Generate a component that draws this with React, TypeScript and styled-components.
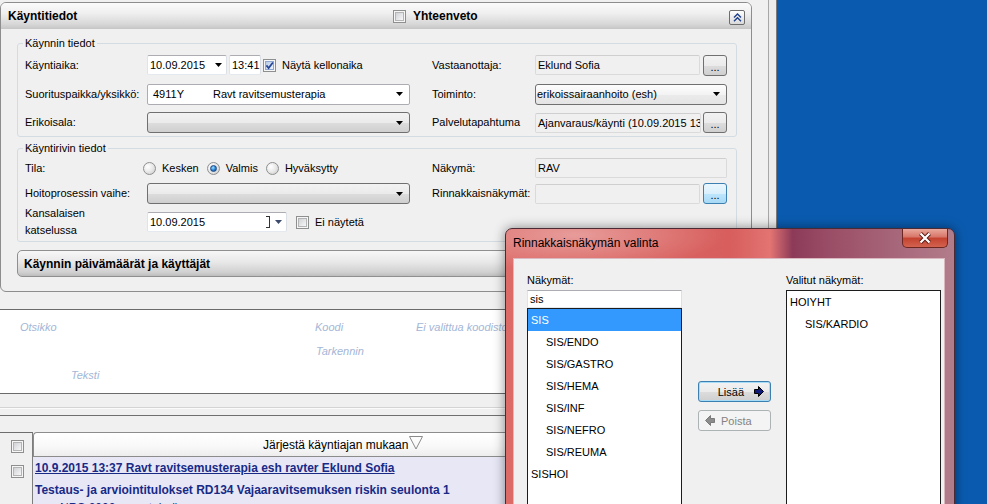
import React from 'react';
import styled, { createGlobalStyle } from 'styled-components';

const FONT = `"Liberation Sans", Arial, sans-serif`;

const GlobalStyle = createGlobalStyle`
  html, body {
    margin: 0;
    padding: 0;
    overflow: hidden;
    background: #f0f0f0;
  }
  body {
    font-family: ${FONT};
    font-size: 11px;
    color: #000;
  }
  * {
    box-sizing: border-box;
  }
`;

const Screen = styled.div`
  position: relative;
  display: flex;
  width: 987px;
  height: 504px;
  overflow: hidden;
`;

const AppArea = styled.div`
  display: flex;
  flex: none;
  width: 777px;
  background: #f0f0f0;
  border-right: 1px solid #7a7a7a;
`;

const MainCol = styled.div`
  display: flex;
  flex-direction: column;
  flex: none;
  width: 768px;
  overflow: hidden;
`;

const SideRail = styled.div`
  flex: 1;
  border-left: 1px solid #a7a7a7;
  background: #ececec;
`;

const Desktop = styled.div`
  flex: 1;
  background: #0a5bb0;
`;

/* ---------- main panel ---------- */

const Panel = styled.section`
  flex: none;
  width: 752px;
  margin-top: 2px;
  border: 1px solid #8d8d8d;
  border-radius: 6px;
  background: #f0f0f0;
  overflow: hidden;
`;

const PanelHeader = styled.header`
  display: grid;
  grid-template-columns: 385px 1fr auto;
  align-items: center;
  height: 26px;
  padding: 0 6px 0 7px;
  background: linear-gradient(#fbfbfb, #efefef 40%, #d8d8d8 80%, #c6c6c6);
`;

const PanelTitle = styled.span`
  font-size: 12px;
  font-weight: bold;
`;

const CollapseButton = styled.button`
  display: flex;
  align-items: center;
  justify-content: center;
  width: 16px;
  height: 15px;
  margin-top: 2px;
  padding: 0;
  border: 1px solid #6d6d6d;
  border-radius: 2px;
  background: linear-gradient(#ffffff, #ececec 50%, #d9d9d9);
`;

const PanelBody = styled.div`
  padding: 8px 14px 14px 16px;
`;

const GroupBox = styled.fieldset<{ $pad: string; $top?: number }>`
  margin: ${(p) => p.$top ?? 0}px 0 0;
  padding: ${(p) => p.$pad};
  min-inline-size: 0;
  border: 1px solid #d3dce3;
  border-radius: 3px;
`;

const GroupLegend = styled.legend`
  margin-left: -2px;
  padding: 0 2px;
  font-size: 11px;
  line-height: 13px;
`;

const FormGrid = styled.div<{ $rows: string; $gap: number }>`
  display: grid;
  grid-template-columns: 122px 263px 22px 103px 192px;
  grid-template-rows: ${(p) => p.$rows};
  row-gap: ${(p) => p.$gap}px;
  align-items: center;
`;

const FieldLabel = styled.span<{ $right?: boolean }>`
  grid-column: ${(p) => (p.$right ? 4 : 1)};
  white-space: nowrap;
  line-height: 17px;
`;

const FieldRow = styled.div<{ $gap: number }>`
  display: flex;
  align-items: center;
  gap: ${(p) => p.$gap}px;
  min-width: 0;
`;

const TextBox = styled.div<{ $readonly?: boolean; $w?: number }>`
  display: flex;
  align-items: center;
  flex: ${(p) => (p.$w ? 'none' : '1')};
  width: ${(p) => (p.$w ? `${p.$w}px` : 'auto')};
  min-width: 0;
  height: 20px;
  padding: 0 4px 0 2px;
  border: 1px solid;
  border-color: ${(p) =>
    p.$readonly ? '#cfcfcf #dadada #dadada #dadada' : '#abadb3 #dbdfe6 #e3e9ef #e2e3ea'};
  border-radius: 2px;
  background: ${(p) => (p.$readonly ? '#f0f0f0' : '#fff')};
  white-space: nowrap;
  overflow: hidden;
`;

const Combo = styled.div<{ $variant: 'white' | 'light' | 'grey' }>`
  display: flex;
  align-items: center;
  flex: 1;
  height: 21px;
  padding: 0 6px 0 ${(p) => (p.$variant === 'white' ? 5 : 1)}px;
  border: 1px solid ${(p) => (p.$variant === 'white' ? '#abadb3' : '#707070')};
  border-radius: ${(p) => (p.$variant === 'white' ? 2 : 3)}px;
  background: ${(p) =>
    p.$variant === 'white'
      ? '#fff'
      : p.$variant === 'light'
        ? 'linear-gradient(#fdfdfd, #f3f3f3 50%, #ebebeb 51%, #e4e4e4)'
        : 'linear-gradient(#f2f2f2, #ebebeb 50%, #dddddd 51%, #cfcfcf)'};
  white-space: nowrap;
`;

const ComboCode = styled.span`
  width: 60px;
  flex: none;
`;

const ArrowSvg = styled.svg`
  flex: none;
  margin-left: auto;
`;

const ComboArrow = ({ color = '#000' }: { color?: string }) => (
  <ArrowSvg width="7" height="4" viewBox="0 0 7 4">
    <polygon points="0,0 7,0 3.5,4" fill={color} />
  </ArrowSvg>
);

const Caret = styled.span`
  flex: none;
  width: 4px;
  height: 12px;
  margin-left: auto;
  margin-right: 5px;
  border: 1px solid #333;
  border-left: none;
`;

const CaretArrow = styled.svg`
  flex: none;
`;

const DotsButton = styled.button<{ $focused?: boolean }>`
  display: flex;
  align-items: flex-end;
  justify-content: center;
  flex: none;
  width: 24px;
  height: 21px;
  padding: 0 0 4px;
  border: 1px solid ${(p) => (p.$focused ? '#3c7fb1' : '#707070')};
  border-radius: 3px;
  background: ${(p) =>
    p.$focused
      ? 'linear-gradient(#eaf6fd, #d9f0fc 50%, #bee6fd 51%, #a7d9f5)'
      : 'linear-gradient(#f2f2f2, #ebebeb 50%, #dddddd 51%, #cfcfcf)'};
  font: 11px ${FONT};
  line-height: 8px;
  color: #000;
`;

const CheckLabel = styled.label<{ $bold?: boolean; $gap?: number }>`
  display: inline-flex;
  align-items: center;
  gap: ${(p) => p.$gap ?? 6}px;
  font-size: ${(p) => (p.$bold ? 12 : 11)}px;
  font-weight: ${(p) => (p.$bold ? 'bold' : 'normal')};
  white-space: nowrap;
`;

const CheckFrame = styled.span<{ $checked?: boolean }>`
  position: relative;
  display: inline-block;
  flex: none;
  width: 13px;
  height: 13px;
  border: 1px solid #8e8f8f;
  background: #f6f6f6;

  &::before {
    content: '';
    position: absolute;
    inset: 1px;
    border: 1px solid ${(p) => (p.$checked ? '#8fa7cf' : '#b4b4b4')};
    background: ${(p) =>
      p.$checked
        ? 'linear-gradient(135deg, #b7cbe8, #eef3fb)'
        : 'linear-gradient(135deg, #d0d2d6, #f7f7f7)'};
  }

  svg {
    position: absolute;
    left: 1px;
    top: 1px;
  }
`;

const CheckBox = ({ checked }: { checked?: boolean }) => (
  <CheckFrame $checked={checked}>
    {checked && (
      <svg width="9" height="9" viewBox="0 0 9 9">
        <path d="M1.4 4.4 L3.6 7.1 L7.9 1.4" fill="none" stroke="#25479a" strokeWidth="1.7" />
      </svg>
    )}
  </CheckFrame>
);

const RadioGroup = styled.div`
  display: flex;
  align-items: center;
  gap: 8px;
  margin-left: -4px;
`;

const RadioDot = styled.span<{ $checked?: boolean }>`
  position: relative;
  flex: none;
  width: 13px;
  height: 13px;
  border: 1px solid #8e8f8f;
  border-radius: 50%;
  background: radial-gradient(circle at 35% 35%, #ffffff 0%, #e8e8e8 50%, #c6c6c6 100%);

  &::after {
    content: '';
    display: ${(p) => (p.$checked ? 'block' : 'none')};
    position: absolute;
    inset: 2px;
    border: 1px solid #1d4a86;
    border-radius: 50%;
    background: radial-gradient(circle at 40% 35%, #a6e4ff 0%, #2b86d6 50%, #0e3f8a 100%);
  }
`;

const SectionBar = styled.div`
  display: flex;
  align-items: center;
  height: 27px;
  margin-top: 8px;
  padding-left: 6px;
  border: 1px solid #8f8f8f;
  border-radius: 5px;
  background: linear-gradient(#f7f7f7, #e8e8e8 45%, #d0d0d0 85%, #bdbdbd);
  font-size: 12px;
  font-weight: bold;
`;

/* ---------- entry area ---------- */

const InfoArea = styled.div`
  display: grid;
  flex: none;
  grid-template-columns: 295px 101px 1fr;
  grid-template-rows: repeat(3, 24px);
  align-items: center;
  height: 85px;
  margin-top: 17px;
  padding: 5px 0 0 20px;
  border-top: 1px solid #6b6b6b;
  border-bottom: 1px solid #6b6b6b;
  background: #fff;
`;

const Hint = styled.span<{ $col: number; $row: number; $indent?: number }>`
  grid-column: ${(p) => p.$col};
  grid-row: ${(p) => p.$row};
  padding-left: ${(p) => p.$indent ?? 0}px;
  color: #a4b6d6;
  font-style: italic;
  white-space: nowrap;
`;

const Splitter = styled.div`
  flex: none;
  height: 22px;
  border-bottom: 1px solid #6f6f6f;
  background: linear-gradient(
    transparent 13px,
    #d4d4d4 13px,
    #d4d4d4 14px,
    #fbfbfb 14px,
    #fbfbfb 15px,
    transparent 15px
  );
`;

const GridArea = styled.div`
  display: grid;
  grid-template-columns: 33px 1fr;
  grid-auto-rows: min-content;
  flex: none;
  padding-top: 16px;
`;

const SelectCell = styled.div<{ $header?: boolean }>`
  height: ${(p) => (p.$header ? '25px' : 'auto')};
  padding: ${(p) => (p.$header ? '7px' : '8px')} 0 0 11px;
  border-top: ${(p) => (p.$header ? '1px solid #6d6d6d' : 'none')};
  border-right: 1px solid #7d7d7d;
`;

const HeaderCell = styled.div`
  display: flex;
  align-items: center;
  height: 25px;
  padding-left: 229px;
  border: 1px solid #8c8c8c;
  border-right: none;
  border-radius: 4px 0 0 0;
  background: linear-gradient(#ffffff, #f8f8f8 60%, #ededed);
  font-size: 12px;
`;

const SortMark = styled.svg`
  align-self: flex-start;
  margin: 3px 0 0 1px;
`;

const VisitCell = styled.div`
  height: 60px;
  padding-left: 2px;
  background: #e7e7f6;
  color: #182a86;
  font-size: 12px;
`;

const VisitLine = styled.div<{ $bold?: boolean; $link?: boolean; $indent?: number; $lift?: number }>`
  height: 22px;
  margin-top: ${(p) => -(p.$lift ?? 0)}px;
  padding-left: ${(p) => p.$indent ?? 0}px;
  line-height: 22px;
  font-weight: ${(p) => (p.$bold ? 'bold' : 'normal')};
  text-decoration: ${(p) => (p.$link ? 'underline' : 'none')};
  white-space: nowrap;
`;

/* ---------- dialog ---------- */

const Dialog = styled.div`
  position: absolute;
  left: 505px;
  top: 228px;
  display: flex;
  flex-direction: column;
  width: 450px;
  height: 330px;
  padding: 0 9px 0 7px;
  border: 1px solid #4b2a34;
  border-radius: 7px 7px 0 0;
  background:
    radial-gradient(ellipse 150px 36px at 70px 6px, rgba(255, 255, 255, 0.35), transparent),
    linear-gradient(
      90deg,
      #dc6b68 0%,
      #d75e5c 50%,
      #e27472 59%,
      #8c3a58 64%,
      #9a4d66 72%,
      #b27d8b 100%
    );
  box-shadow: 0 0 12px rgba(0, 0, 0, 0.45);
`;

const TitleBar = styled.div`
  display: flex;
  align-items: flex-start;
  flex: none;
  height: 29px;
`;

const TitleText = styled.span`
  padding-top: 7px;
  font-size: 12px;
  line-height: 14px;
`;

const CloseButton = styled.button`
  display: flex;
  align-items: center;
  justify-content: center;
  width: 46px;
  height: 19px;
  margin: 0 -3px 0 auto;
  padding: 0;
  border: 1px solid #6e2720;
  border-top: none;
  border-radius: 0 0 5px 5px;
  background: linear-gradient(#eaa89c, #d77568 45%, #c4412f 50%, #d2634f);
`;

const DialogClient = styled.div`
  display: grid;
  grid-template-columns: 155px 104px 155px;
  align-items: start;
  flex: 1;
  min-height: 0;
  overflow: hidden;
  padding: 0 3px 0 13px;
  border: 1px solid #d9b8c0;
  background: #f0f0f0;
`;

const DialogCol = styled.div`
  display: flex;
  flex-direction: column;
`;

const DialogLabel = styled.span`
  display: flex;
  align-items: flex-end;
  flex: none;
  height: 31px;
  padding-bottom: 4px;
`;

const SearchBox = styled.div`
  display: flex;
  align-items: center;
  flex: none;
  height: 18px;
  padding-left: 2px;
  border: 1px solid;
  border-color: #abadb3 #dbdfe6 #e3e9ef #e2e3ea;
  background: #fff;
`;

const ListBox = styled.ul<{ $h: number }>`
  flex: none;
  height: ${(p) => p.$h}px;
  margin: 0;
  padding: 0;
  list-style: none;
  border: 1px solid #1c1c1c;
  background: #fff;
`;

const ListItem = styled.li<{ $indent?: boolean; $selected?: boolean }>`
  height: 22px;
  padding-left: ${(p) => (p.$indent ? 18 : 3)}px;
  line-height: 22px;
  background: ${(p) => (p.$selected ? '#3399ff' : 'transparent')};
  color: ${(p) => (p.$selected ? '#fff' : '#000')};
`;

const ButtonCol = styled.div`
  display: flex;
  flex-direction: column;
  gap: 8px;
  padding: 122px 0 0 16px;
`;

const DialogButton = styled.button<{ $primary?: boolean }>`
  display: flex;
  align-items: center;
  justify-content: ${(p) => (p.$primary ? 'flex-end' : 'flex-start')};
  gap: ${(p) => (p.$primary ? 10 : 6)}px;
  width: 73px;
  height: 21px;
  padding: 0 6px;
  border: 1px solid ${(p) => (p.$primary ? '#3c7fb1' : '#adb2b5')};
  border-radius: 3px;
  background: ${(p) =>
    p.$primary ? 'linear-gradient(#f2f2f2, #ebebeb 50%, #dddddd 51%, #cfcfcf)' : '#f4f4f4'};
  box-shadow: ${(p) => (p.$primary ? 'inset 0 0 0 1px #a6dcf7' : 'none')};
  font: 11px ${FONT};
  color: ${(p) => (p.$primary ? '#000' : '#838383')};
`;

const visitOptions = [
  { name: 'SIS', indent: false, selected: true },
  { name: 'SIS/ENDO', indent: true },
  { name: 'SIS/GASTRO', indent: true },
  { name: 'SIS/HEMA', indent: true },
  { name: 'SIS/INF', indent: true },
  { name: 'SIS/NEFRO', indent: true },
  { name: 'SIS/REUMA', indent: true },
  { name: 'SISHOI', indent: false },
];

const chosen = [
  { name: 'HOIYHT', indent: false },
  { name: 'SIS/KARDIO', indent: true },
];

export default function App() {
  return (
    <>
      <GlobalStyle />
      <Screen>
        <AppArea>
          <MainCol>
            <Panel>
              <PanelHeader>
                <PanelTitle>Käyntitiedot</PanelTitle>
                <CheckLabel $bold $gap={7}>
                  <CheckBox />
                  Yhteenveto
                </CheckLabel>
                <CollapseButton aria-label="Pienennä">
                  <svg width="9" height="9" viewBox="0 0 9 9">
                    <polyline points="1,4.5 4.5,1 8,4.5" fill="none" stroke="#1e3f8c" strokeWidth="1.4" />
                    <polyline points="1,8.2 4.5,4.7 8,8.2" fill="none" stroke="#1e3f8c" strokeWidth="1.4" />
                  </svg>
                </CollapseButton>
              </PanelHeader>

              <PanelBody>
                <GroupBox $pad="1px 9px 0 7px">
                  <GroupLegend>Käynnin tiedot</GroupLegend>
                  <FormGrid $rows="28px 28px 27px" $gap={1}>
                    <FieldLabel>Käyntiaika:</FieldLabel>
                    <FieldRow $gap={2}>
                      <TextBox $w={80}>
                        10.09.2015
                        <ComboArrow />
                      </TextBox>
                      <TextBox $w={32}>13:41</TextBox>
                      <CheckLabel>
                        <CheckBox checked />
                        Näytä kellonaika
                      </CheckLabel>
                    </FieldRow>
                    <FieldLabel $right>Vastaanottaja:</FieldLabel>
                    <FieldRow $gap={3}>
                      <TextBox $readonly>Eklund Sofia</TextBox>
                      <DotsButton>...</DotsButton>
                    </FieldRow>

                    <FieldLabel>Suorituspaikka/yksikkö:</FieldLabel>
                    <FieldRow $gap={0}>
                      <Combo $variant="white">
                        <ComboCode>4911Y</ComboCode>
                        Ravt ravitsemusterapia
                        <ComboArrow />
                      </Combo>
                    </FieldRow>
                    <FieldLabel $right>Toiminto:</FieldLabel>
                    <FieldRow $gap={0}>
                      <Combo $variant="light">
                        erikoissairaanhoito (esh)
                        <ComboArrow />
                      </Combo>
                    </FieldRow>

                    <FieldLabel>Erikoisala:</FieldLabel>
                    <FieldRow $gap={0}>
                      <Combo $variant="grey">
                        <ComboArrow />
                      </Combo>
                    </FieldRow>
                    <FieldLabel $right>Palvelutapahtuma</FieldLabel>
                    <FieldRow $gap={2}>
                      <TextBox $readonly>Ajanvaraus/käynti (10.09.2015 13:41)</TextBox>
                      <DotsButton>...</DotsButton>
                    </FieldRow>
                  </FormGrid>
                </GroupBox>

                <GroupBox $pad="0 9px 3px 7px" $top={5}>
                  <GroupLegend>Käyntirivin tiedot</GroupLegend>
                  <FormGrid $rows="26px 25px 32px" $gap={0}>
                    <FieldLabel>Tila:</FieldLabel>
                    <RadioGroup>
                      <CheckLabel>
                        <RadioDot />
                        Kesken
                      </CheckLabel>
                      <CheckLabel>
                        <RadioDot $checked />
                        Valmis
                      </CheckLabel>
                      <CheckLabel>
                        <RadioDot />
                        Hyväksytty
                      </CheckLabel>
                    </RadioGroup>
                    <FieldLabel $right>Näkymä:</FieldLabel>
                    <FieldRow $gap={0}>
                      <TextBox $readonly>RAV</TextBox>
                    </FieldRow>

                    <FieldLabel>Hoitoprosessin vaihe:</FieldLabel>
                    <FieldRow $gap={0}>
                      <Combo $variant="grey">
                        <ComboArrow />
                      </Combo>
                    </FieldRow>
                    <FieldLabel $right>Rinnakkaisnäkymät:</FieldLabel>
                    <FieldRow $gap={3}>
                      <TextBox $readonly />
                      <DotsButton $focused>...</DotsButton>
                    </FieldRow>

                    <FieldLabel>
                      Kansalaisen
                      <br />
                      katselussa
                    </FieldLabel>
                    <FieldRow $gap={9}>
                      <TextBox $w={140}>
                        10.09.2015
                        <Caret />
                        <CaretArrow width="7" height="4" viewBox="0 0 7 4">
                          <polygon points="0,0 7,0 3.5,4" fill="#3b4a6b" />
                        </CaretArrow>
                      </TextBox>
                      <CheckLabel>
                        <CheckBox />
                        Ei näytetä
                      </CheckLabel>
                    </FieldRow>
                  </FormGrid>
                </GroupBox>

                <SectionBar>Käynnin päivämäärät ja käyttäjät</SectionBar>
              </PanelBody>
            </Panel>

            <InfoArea>
              <Hint $col={1} $row={1}>Otsikko</Hint>
              <Hint $col={2} $row={1}>Koodi</Hint>
              <Hint $col={3} $row={1}>Ei valittua koodistoa</Hint>
              <Hint $col={2} $row={2} $indent={1}>Tarkennin</Hint>
              <Hint $col={1} $row={3} $indent={51}>Teksti</Hint>
            </InfoArea>

            <Splitter />

            <GridArea>
              <SelectCell $header>
                <CheckBox />
              </SelectCell>
              <HeaderCell>
                Järjestä käyntiajan mukaan
                <SortMark width="14" height="14" viewBox="0 0 14 14">
                  <polygon points="0.5,0.5 13.5,0.5 7,13" fill="none" stroke="#8a8a8a" />
                </SortMark>
              </HeaderCell>

              <SelectCell>
                <CheckBox />
              </SelectCell>
              <VisitCell>
                <VisitLine $bold $link>
                  10.9.2015 13:37 Ravt ravitsemusterapia esh ravter Eklund Sofia
                </VisitLine>
                <VisitLine $bold>
                  Testaus- ja arviointitulokset RD134 Vajaaravitsemuksen riskin seulonta 1
                </VisitLine>
                <VisitLine $indent={25} $lift={4}>
                  NRS 2002 menetelmä:
                </VisitLine>
              </VisitCell>
            </GridArea>
          </MainCol>
          <SideRail />
        </AppArea>

        <Desktop />

        <Dialog>
          <TitleBar>
            <TitleText>Rinnakkaisnäkymän valinta</TitleText>
            <CloseButton aria-label="Sulje">
              <svg width="14" height="12" viewBox="0 0 14 12">
                <path d="M2.5 1.5 L11.5 10.5 M11.5 1.5 L2.5 10.5" stroke="#5a1a14" strokeWidth="4" />
                <path d="M2.5 1.5 L11.5 10.5 M11.5 1.5 L2.5 10.5" stroke="#ffffff" strokeWidth="2.2" />
              </svg>
            </CloseButton>
          </TitleBar>

          <DialogClient>
            <DialogCol>
              <DialogLabel>Näkymät:</DialogLabel>
              <SearchBox>sis</SearchBox>
              <ListBox $h={240}>
                {visitOptions.map((o) => (
                  <ListItem key={o.name} $indent={o.indent} $selected={o.selected}>
                    {o.name}
                  </ListItem>
                ))}
              </ListBox>
            </DialogCol>

            <ButtonCol>
              <DialogButton $primary>
                Lisää
                <svg width="10" height="11" viewBox="0 0 10 11">
                  <polygon
                    points="0.5,3.5 4.5,3.5 4.5,0.5 9.5,5.5 4.5,10.5 4.5,7.5 0.5,7.5"
                    fill="#101a78"
                    stroke="#000"
                  />
                </svg>
              </DialogButton>
              <DialogButton disabled>
                <svg width="10" height="11" viewBox="0 0 10 11">
                  <polygon
                    points="9.5,3.5 5.5,3.5 5.5,0.5 0.5,5.5 5.5,10.5 5.5,7.5 9.5,7.5"
                    fill="#8c8c8c"
                    stroke="#7a7a7a"
                  />
                </svg>
                Poista
              </DialogButton>
            </ButtonCol>

            <DialogCol>
              <DialogLabel>Valitut näkymät:</DialogLabel>
              <ListBox $h={260}>
                {chosen.map((o) => (
                  <ListItem key={o.name} $indent={o.indent}>
                    {o.name}
                  </ListItem>
                ))}
              </ListBox>
            </DialogCol>
          </DialogClient>
        </Dialog>
      </Screen>
    </>
  );
}
